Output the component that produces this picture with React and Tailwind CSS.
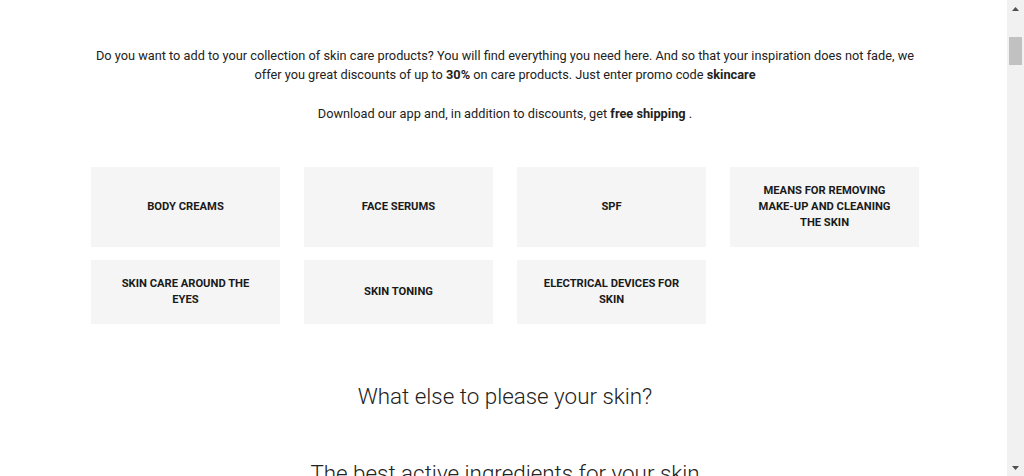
import React from 'react';

const categories = [
  'Body creams',
  'Face serums',
  'SPF',
  'Means for removing make-up and cleaning the skin',
  'Skin care around the eyes',
  'Skin toning',
  'Electrical devices for skin',
];

const stripe = [
  ['w-[90px]', 'bg-[#f6f5e4]'],
  ['w-[70px]', 'bg-[#b9a58c]'],
  ['w-[60px]', 'bg-[#8c7c6a]'],
  ['w-[60px]', 'bg-[#d8c7b4]'],
  ['w-[60px]', 'bg-[#a89580]'],
  ['w-[60px]', 'bg-[#b4907c]'],
  ['w-[20px]', 'bg-[#4d5a3a]'],
  ['w-[90px]', 'bg-[#d3e8bf]'],
  ['w-[80px]', 'bg-[#a9ddd1]'],
  ['w-[30px]', 'bg-[#3a3636]'],
  ['w-[60px]', 'bg-[#e9c3c3]'],
  ['w-[40px]', 'bg-[#cdb0cb]'],
  ['w-[80px]', 'bg-[#d9cde3]'],
  ['w-[70px]', 'bg-[#9f95b3]'],
  ['flex-1', 'bg-[#8ad3d3]'],
];

const CategoryCard = ({ title }) => (
  <div className="bg-[#f5f5f5] flex items-center justify-center text-center px-6 py-4">
    <span className="text-[11.2px] leading-4 font-bold uppercase text-[#1a1a1a]">{title}</span>
  </div>
);

const Scrollbar = () => (
  <div className="w-[17px] h-full bg-[#f1f1f1] flex flex-col items-center">
    <div className="h-[17px] flex items-center justify-center">
      <svg width="7" height="4" viewBox="0 0 7 4"><path d="M3.5 0L7 4H0z" fill="#505050" /></svg>
    </div>
    <div className="mt-[20px] w-[13px] h-[28px] bg-[#c1c1c1]" />
    <div className="flex-1" />
    <div className="h-[17px] flex items-center justify-center">
      <svg width="7" height="4" viewBox="0 0 7 4"><path d="M0 0H7L3.5 4z" fill="#505050" /></svg>
    </div>
  </div>
);

export default function App() {
  return (
    <div
      className="w-[1024px] h-[476px] flex overflow-hidden bg-white text-[#222]"
      style={{ fontFamily: 'Roboto, "Liberation Sans", sans-serif' }}
    >
      <div className="flex-1 flex flex-col min-w-0">
        {/* banner image bottom edge */}
        <div className="flex h-[2px] w-full">
          {stripe.map(([w, c], i) => (
            <div key={i} className={`${w} ${c}`} />
          ))}
        </div>

        <div className="ml-[91px] w-[828px] flex flex-col">
          <div className="mt-[46px] text-[12.75px] leading-[19px] text-center text-[#222]">
            <p>
              Do you want to add to your collection of skin care products? You will find everything you need here. And so
              that your inspiration does not fade, we offer you great discounts of up to <b>30%</b> on care products. Just
              enter promo code <b>skincare</b>
            </p>
            <p className="mt-[20px]">
              Download our app and, in addition to discounts, get <b>free shipping</b> .
            </p>
          </div>

          <div className="mt-[44px] grid grid-cols-4 gap-x-6 gap-y-[13px]">
            {categories.map((c) => (
              <CategoryCard key={c} title={c} />
            ))}
          </div>

          <h2 className="mt-[56px] text-[22.4px] leading-[32px] font-light text-center text-[#222]">
            What else to please your skin?
          </h2>
          <h2 className="mt-[45px] text-[22.4px] leading-[32px] font-light text-center text-[#222]">
            The best active ingredients for your skin
          </h2>
        </div>
      </div>
      <Scrollbar />
    </div>
  );
}
